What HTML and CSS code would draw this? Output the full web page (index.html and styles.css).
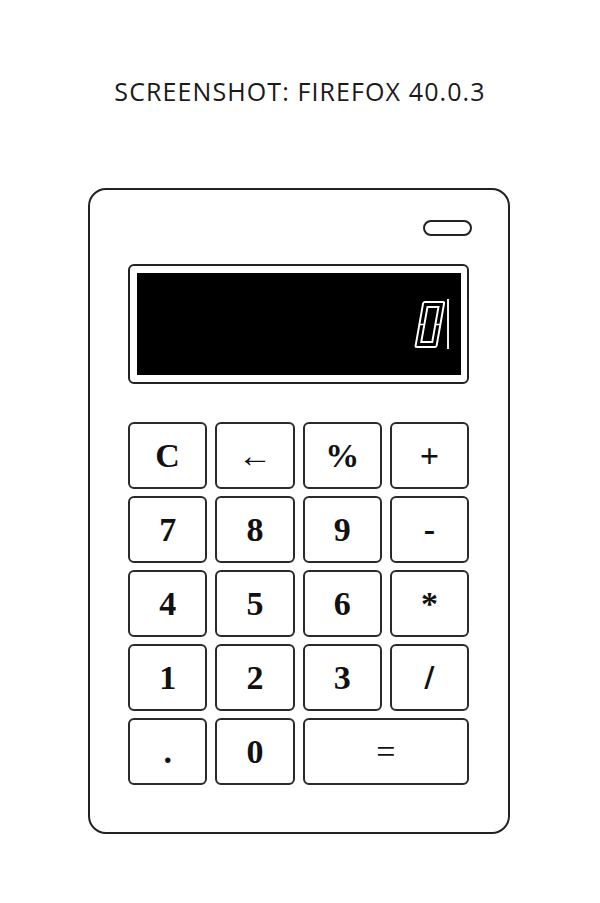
FILE: index.html
```html
<!DOCTYPE html>
<html>
<head>
<meta charset="utf-8">
<link rel="stylesheet" href="styles.css">
</head>
<body>
<div class="title">SCREENSHOT: FIREFOX 40.0.3</div>
<div class="calc">
  <div class="top-row"><div class="pill"></div></div>
  <div class="display">
    <div class="screen">
      <svg class="digit" width="34" height="50" viewBox="0 0 34 50">
        <g transform="translate(9.5,2) skewX(-10)" fill="none" stroke="#fff" stroke-width="2">
          <rect x="1" y="1" width="21" height="45" rx="1.5"/>
          <rect x="6" y="6" width="11" height="35"/>
          <line x1="1" y1="23.5" x2="6" y2="23.5" stroke-width="1.6"/>
          <line x1="17" y1="23.5" x2="22" y2="23.5" stroke-width="1.6"/>
        </g>
      </svg>
      <span class="caret"></span>
    </div>
  </div>
  <div class="keys">
    <div class="key">C</div>
    <div class="key thin">←</div>
    <div class="key">%</div>
    <div class="key">+</div>
    <div class="key">7</div>
    <div class="key">8</div>
    <div class="key">9</div>
    <div class="key">-</div>
    <div class="key">4</div>
    <div class="key">5</div>
    <div class="key">6</div>
    <div class="key">*</div>
    <div class="key">1</div>
    <div class="key">2</div>
    <div class="key">3</div>
    <div class="key slash">/</div>
    <div class="key">.</div>
    <div class="key">0</div>
    <div class="key thin wide">=</div>
  </div>
</div>
</body>
</html>
```

FILE: styles.css
```css
html, body {
  margin: 0;
  padding: 0;
  background: #fff;
}
body {
  width: 600px;
}
.title {
  padding-top: 75px;
  height: 32px;
  line-height: 32px;
  font-family: "Open Sans", sans-serif;
  font-size: 25px;
  letter-spacing: 1.1px;
  color: #1a1a1a;
  text-align: center;
}
.calc {
  box-sizing: border-box;
  width: 422px;
  height: 646px;
  margin: 81px 0 0 88px;
  border: 2px solid #222;
  border-radius: 18px;
  padding: 30px 39px 0 38px;
}
.top-row {
  display: flex;
  justify-content: flex-end;
  margin-right: -3px;
}
.pill {
  box-sizing: border-box;
  width: 49px;
  height: 16px;
  border: 2px solid #222;
  border-radius: 8px;
}
.display {
  box-sizing: border-box;
  margin-top: 28px;
  height: 120px;
  border: 2px solid #222;
  border-radius: 6px;
  padding: 7px 6px 7px 7px;
}
.screen {
  height: 102px;
  background: #000;
  display: flex;
  justify-content: flex-end;
  align-items: center;
  padding-right: 12px;
}
.digit {
  display: block;
}
.caret {
  display: block;
  width: 2px;
  height: 50px;
  background: #eee;
}
.keys {
  margin-top: 38px;
  display: grid;
  grid-template-columns: repeat(4, 1fr);
  grid-auto-rows: 67px;
  column-gap: 8px;
  row-gap: 7px;
}
.key {
  box-sizing: border-box;
  border: 2px solid #2a2a2a;
  border-radius: 6px;
  display: flex;
  align-items: center;
  justify-content: center;
  font-family: "Liberation Serif", "Times New Roman", serif;
  font-weight: bold;
  font-size: 34px;
  color: #111;
}
.key.thin {
  font-weight: normal;
}
.key.slash {
  font-family: "DejaVu Serif", serif;
  font-size: 28px;
}
.key.wide {
  grid-column: span 2;
}
```
